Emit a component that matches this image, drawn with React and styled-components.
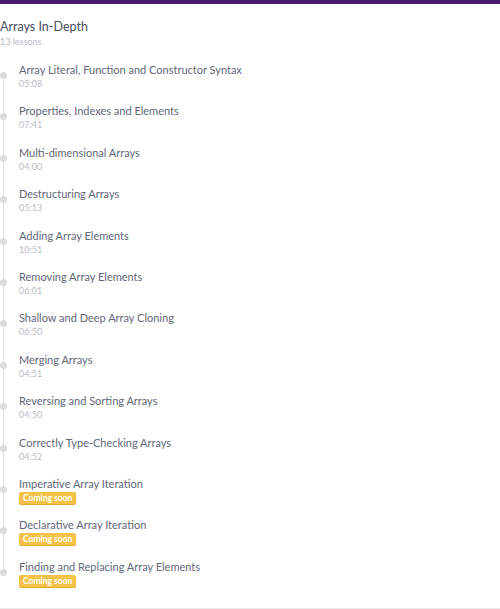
import styled, { createGlobalStyle } from 'styled-components'

const GlobalStyle = createGlobalStyle`
body {
  margin: 0;
  background: #fff;
  font-family: Lato, "Open Sans", sans-serif;
}
`

const TopBar = styled.div`
height: 4px;
background-color: #4a1870;
`

const Section = styled.div`
height: 605px;
border-bottom: 1px solid #ececec;
box-sizing: border-box;
`

const Header = styled.div`
padding-top: 15px;
`

const Title = styled.h3`
margin: 0;
font-size: 12.5px;
line-height: 16px;
font-weight: 400;
color: #4a4f62;
`

const Subtitle = styled.p`
margin: 0;
font-size: 9px;
line-height: 13px;
color: #b8bbc4;
`

const List = styled.ul`
list-style: none;
margin: 0;
padding: 15px 0 0 0;
`

const Item = styled.li`
position: relative;
padding-left: 19px;
height: 41.4px;

&::before {
  content: '';
  position: absolute;
  left: 3px;
  top: 13px;
  width: 1px;
  height: 100%;
  background: #e2e2e2;
  display: ${p => (p.$last ? 'none' : 'block')};
}

&::after {
  content: '';
  position: absolute;
  left: 0;
  top: 9px;
  width: 7px;
  height: 7px;
  border-radius: 50%;
  background: #dcdcdc;
}
`

const LessonTitle = styled.div`
font-size: 11px;
line-height: 14px;
color: #62677a;
`

const Duration = styled.div`
font-size: 9px;
line-height: 13px;
color: #b9bcc5;
`

const Badge = styled.div`
width: fit-content;
margin-top: 1px;
padding: 0 4px;
height: 12px;
line-height: 12px;
font-size: 8.5px;
font-weight: 700;
color: #fff;
background: #f4c24a;
border-radius: 2px;
box-shadow: 0 1px 0 #e3ac2e;
`

const lessons = [
  { title: 'Array Literal, Function and Constructor Syntax', time: '05:08' },
  { title: 'Properties, Indexes and Elements', time: '07:41' },
  { title: 'Multi-dimensional Arrays', time: '04:00' },
  { title: 'Destructuring Arrays', time: '05:13' },
  { title: 'Adding Array Elements', time: '10:51' },
  { title: 'Removing Array Elements', time: '06:01' },
  { title: 'Shallow and Deep Array Cloning', time: '06:50' },
  { title: 'Merging Arrays', time: '04:51' },
  { title: 'Reversing and Sorting Arrays', time: '04:50' },
  { title: 'Correctly Type-Checking Arrays', time: '04:52' },
  { title: 'Imperative Array Iteration' },
  { title: 'Declarative Array Iteration' },
  { title: 'Finding and Replacing Array Elements' },
]

const App = () => {
  return (
    <>
      <GlobalStyle />
      <TopBar />
      <Section>
        <Header>
          <Title>Arrays In-Depth</Title>
          <Subtitle>13 lessons</Subtitle>
        </Header>
        <List>
          {lessons.map((l, i) => (
            <Item key={l.title} $last={i === lessons.length - 1}>
              <LessonTitle>{l.title}</LessonTitle>
              {l.time ? <Duration>{l.time}</Duration> : <Badge>Coming soon</Badge>}
            </Item>
          ))}
        </List>
      </Section>
    </>
  )
}

export default App
